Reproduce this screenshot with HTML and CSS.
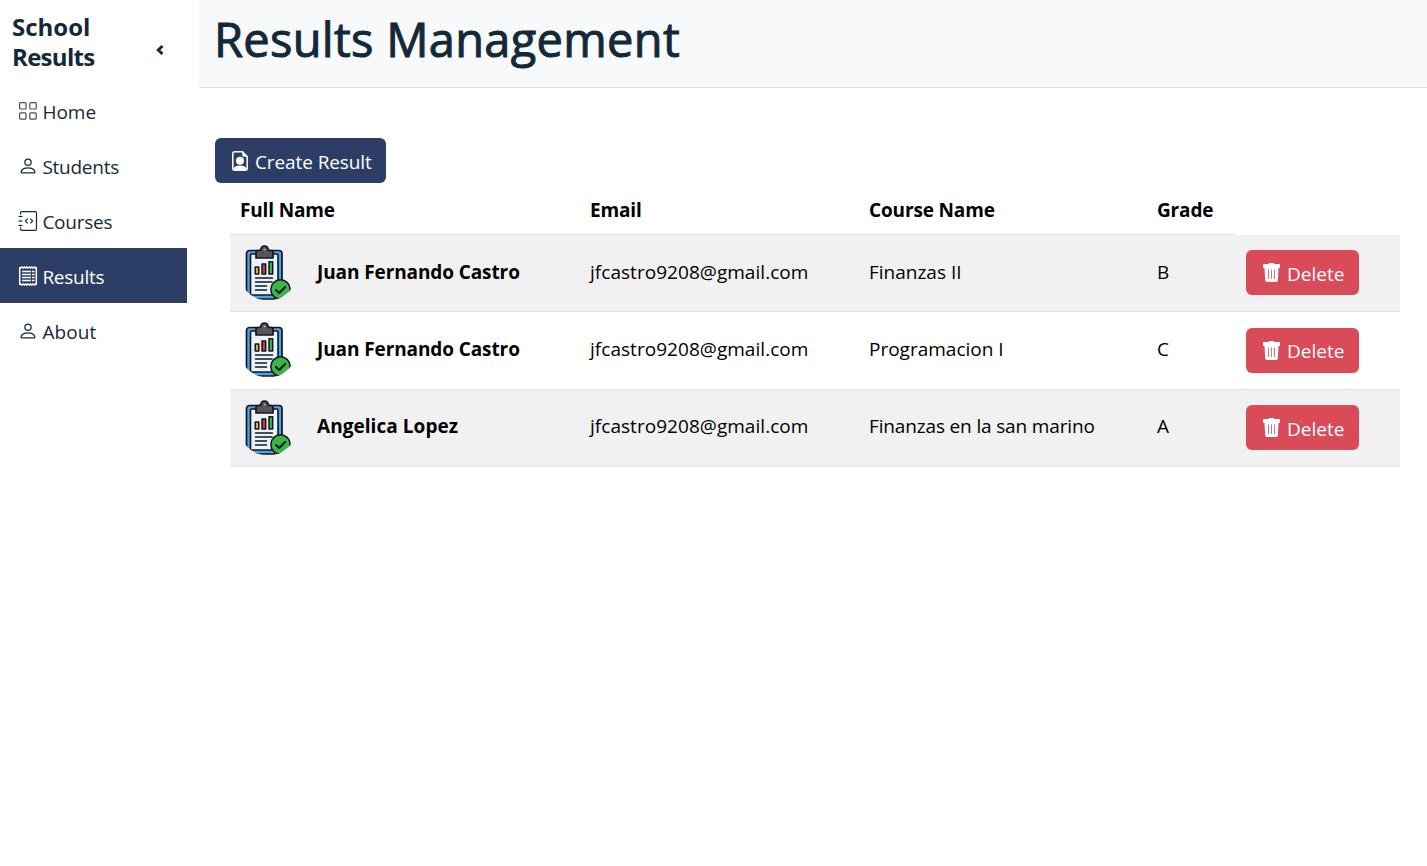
FILE: index.html
```html
<!DOCTYPE html>
<html lang="en">
<head>
<meta charset="utf-8">
<title>Results Management</title>
<link rel="stylesheet" href="styles.css">
</head>
<body>
<svg class="defs" width="0" height="0">
  <symbol id="person" viewBox="0 0 16 16"><path d="M8 8a3 3 0 1 0 0-6 3 3 0 0 0 0 6m2-3a2 2 0 1 1-4 0 2 2 0 0 1 4 0m4 8c0 1-1 1-1 1H3s-1 0-1-1 1-4 6-4 6 3 6 4m-1-.004c-.001-.246-.154-.986-.832-1.664C11.516 10.68 10.289 10 8 10s-3.516.68-4.168 1.332c-.678.678-.83 1.418-.832 1.664z"/></symbol>
  <symbol id="trash" viewBox="0 0 17 19"><path fill-rule="evenodd" d="M6.500 0h4a.8.8 0 0 1 .8.8V1H16.500a.5.500 0 0 1 .5.500v3a.5.500 0 0 1-.5.500H15.500l-.6 12a2 2 0 0 1-2 2H4.100a2 2 0 0 1-2-2L1.500 5H.5a.5.500 0 0 1-.5-.5v-3A.5.500 0 0 1 .5 1h5.200V.8A.8.8 0 0 1 6.500 0M5 6.500v9.500h.8V6.500zm3.100 0v9.500h.8V6.500zm3.100 0v9.500h.8V6.500z"/></symbol>
  <symbol id="report" viewBox="0 0 60 60">
    <clipPath id="round"><circle cx="30" cy="28" r="29.500"/></clipPath>
    <g clip-path="url(#round)" stroke="#15171c" stroke-linejoin="round" stroke-linecap="round">
      <rect x="8.500" y="7.500" width="35.500" height="48.500" rx="3" fill="#4da3e8" stroke-width="1.700"/>
      <rect x="12.500" y="11" width="27.500" height="41" rx="1" fill="#e9f2fd" stroke-width="1.600"/>
      <path d="M18 15v-5.500q0-2 2-2h2.500q.5-4.500 4-4.500t4 4.500H33q2 0 2 2V15z" fill="#59545c" stroke-width="1.700"/>
      <circle cx="26.500" cy="6.500" r=".8" fill="#ddd" stroke="none"/>
      <g stroke-width="1.500"><path d="M17.200 24h3.600v7h-3.600z" fill="#f4a623"/><path d="M24 21h3.700v10h-3.700z" fill="#d63445"/><path d="M31 18.800h3.700V31h-3.700z" fill="#3bb54a"/></g>
      <path d="M17.500 35h17M17.500 39h16.500M17.500 43h11M17.500 47h11" stroke-width="1.500"/>
      <circle cx="42.500" cy="46.500" r="9.700" fill="#3bb54a" stroke-width="1.500"/>
      <path d="m38 47 3.200 3 6-6" fill="none" stroke-width="2"/>
    </g>
  </symbol>
</svg>
<div class="app">
  <aside class="sidebar">
    <div class="brand"><h2 class="brand-name">School<br><span class="brand-second">Results</span></h2>
      <svg class="chevron" viewBox="0 0 8 10"><path d="M6.500 1 2.300 5l4.200 4" fill="none" stroke="currentColor" stroke-width="2.900"/></svg></div>
    <nav class="nav">
      <a class="nav-item"><svg class="icon grid-icon" viewBox="0 0 18 18"><g fill="none" stroke="#59406b" stroke-width="1.200"><rect x=".6" y=".6" width="6.400" height="6.400" rx="1"/><rect x="10.800" y=".6" width="6.400" height="6.400" rx="1"/><rect x=".6" y="10.800" width="6.400" height="6.400" rx="1"/><rect x="10.800" y="10.800" width="6.400" height="6.400" rx="1"/></g></svg><span class="nav-text">Home</span></a>
      <a class="nav-item"><svg class="icon"><use href="#person"/></svg><span class="nav-text tight">Students</span></a>
      <a class="nav-item"><svg class="icon" viewBox="0 0 20 20"><g fill="none" stroke="currentColor" stroke-width="1.200"><path d="M2.500 3.500V2Q2.500.6 4 .6h13Q18.500.6 18.500 2v16q0 1.400-1.500 1.400H4q-1.500 0-1.500-1.400v-1.500M2.500 4.700v1.600M2.500 9.200v1.600M2.500 13.700v1.600M.5 5.500h4M.5 10h4M.5 14.500h4M9.700 7.700 7.400 10l2.300 2.300M12.300 7.700l2.300 2.300-2.300 2.300"/></g></svg><span class="nav-text tight">Courses</span></a>
      <a class="nav-item active"><svg class="icon" viewBox="0 0 20 20"><g fill="none" stroke="currentColor" stroke-width="1.500"><path d="M1.700 1v18M18.300 1v18M1.500 1l1.200 1L4 1l1.200 1 1.200-1 1.200 1 1.200-1L10 2l1.200-1 1.200 1 1.200-1 1.200 1L16 1l1.200 1 1.200-1M1.500 19l1.200-1L4 19l1.200-1 1.200 1 1.200-1 1.200 1 1.200-1 1.200 1 1.200-1 1.200 1 1.200-1 1.200 1 1.200-1 1.200 1M4 5.500h9M4 8.500h9M4 11.500h9M4 14.500h9M14 5.500h2.500M14 8.500h2.500M14 11.500h2.500M14 14.500h2.500"/></g></svg><span class="nav-text tight">Results</span></a>
      <a class="nav-item"><svg class="icon"><use href="#person"/></svg><span class="nav-text about">About</span></a>
    </nav>
  </aside>
  <main class="main">
    <header class="header"><h1 class="title">Results Management</h1></header>
    <section class="content">
      <button class="btn create"><svg class="create-icon" viewBox="0 0 16 20"><path d="M10.500.8H2.800Q.8.800.8 2.800v14.400q0 2 2 2h10.400q2 0 2-2V5.500z" fill="none" stroke="currentColor" stroke-width="1.500"/><path d="M10.200.5v3.600q0 1.700 1.700 1.700h3.600z" fill="currentColor"/><circle cx="8" cy="9.800" r="4" fill="currentColor"/><path d="M1.500 17.500q1.500-3 6.500-3t6.500 3v1.500h-13z" fill="currentColor"/></svg><span class="create-text">Create Result</span></button>
      <table class="table">
        <colgroup><col class="c-name"><col class="c-email"><col class="c-course"><col class="c-grade"><col class="c-action"></colgroup>
        <thead><tr><th>Full Name</th><th>Email</th><th>Course Name</th><th>Grade</th></tr></thead>
        <tbody>
          <tr><td><div class="person"><svg class="report"><use href="#report"/></svg><b class="name">Juan Fernando Castro</b></div></td><td><span class="email">jfcastro9208@gmail.com</span></td><td>Finanzas II</td><td>B</td><td class="action"><button class="btn delete"><svg class="trash"><use href="#trash"/></svg><span>Delete</span></button></td></tr>
          <tr class="tall"><td><div class="person"><svg class="report"><use href="#report"/></svg><b class="name">Juan Fernando Castro</b></div></td><td><span class="email">jfcastro9208@gmail.com</span></td><td>Programacion I</td><td>C</td><td class="action"><button class="btn delete"><svg class="trash"><use href="#trash"/></svg><span>Delete</span></button></td></tr>
          <tr class="last"><td><div class="person"><svg class="report"><use href="#report"/></svg><b class="name angelica">Angelica Lopez</b></div></td><td><span class="email">jfcastro9208@gmail.com</span></td><td><span class="marino">Finanzas en la san marino</span></td><td>A</td><td class="action"><button class="btn delete"><svg class="trash"><use href="#trash"/></svg><span>Delete</span></button></td></tr>
        </tbody>
      </table>
    </section>
  </main>
</div>
</body>
</html>
```
FILE: styles.css
```css
* { box-sizing: border-box; }
body { margin: 0; background: #fff; color: #000; font: 400 19px/30px "Open Sans", "Noto Sans", sans-serif; }
.defs { position: absolute; }
.app { display: flex; min-height: 866px; }
.sidebar { width: 199px; flex: none; color: #142938; }
.brand { display: flex; align-items: center; justify-content: space-between; height: 83px; padding: 1px 35px 0 12px; }
.brand-name { margin: 0; font-size: 24px; line-height: 30px; font-weight: 700; }
.brand-second { letter-spacing: -.7px; }
.chevron { width: 8px; height: 10px; margin-top: 16px; }
.nav { width: 187px; padding-bottom: 1px; }
.nav-item { display: flex; align-items: center; gap: 4px; height: 55px; padding-left: 18.4px; }
.nav-item.active { background: #2c3e66; color: #fff; }
.nav-text { padding-top: 3px; }
.tight { letter-spacing: -.25px; }
.about { letter-spacing: .1px; }
.icon { width: 20px; height: 20px; fill: currentColor; flex: none; }
.grid-icon { width: 18px; height: 18px; margin: 0 1px; }
.main { flex: 1; }
.header { height: 88px; padding: 9px 15px; background: #f8f9fb; border-bottom: 1px solid #dee2e6; }
.title { margin: 0; color: #142938; font-size: 47px; line-height: 60px; font-weight: 500; letter-spacing: .3px; -webkit-text-stroke: 1px #142938; }
.content { padding: 50px 27px 0 16px; }
.btn { display: flex; align-items: center; height: 45px; border: 0; border-radius: 6px; color: #fff; font: inherit; }
.create { width: 171px; padding: 2px 0 0 17px; gap: 7px; background: #2c3e66; white-space: nowrap; }
.create-text { letter-spacing: -.1px; }
.create-icon { width: 16px; height: 20px; margin-top: -2px; }
.table { width: 1170px; margin: 3px 0 0 15px; table-layout: fixed; border-collapse: separate; border-spacing: 0; }
.c-name { width: 350px; }
.c-email { width: 279px; }
.c-course { width: 288px; }
.c-grade { width: 88px; }
.c-action { width: 165px; }
th { height: 49px; padding: 0 10px; text-align: left; font-weight: 700; letter-spacing: -.15px; border-bottom: 1px solid #dee2e6; }
td { height: 77px; padding: 0 10px 2px; white-space: nowrap; border-bottom: 1px solid #dee2e6; }
.tall td { height: 78px; padding-bottom: 4px; }
.last td { padding-bottom: 4px; }
tbody td:first-child { padding: 0 8px; }
tbody tr:nth-child(odd) { background: #f1f1f1; }
.person { display: flex; align-items: center; gap: 19px; }
.report { width: 60px; height: 60px; }
.tall .report { margin-top: -1px; margin-bottom: 1px; }
.name { padding-bottom: 2px; letter-spacing: -.1px; }
.tall .name, .last .name { padding-bottom: 4px; }
.angelica { letter-spacing: .05px; }
.email { letter-spacing: .04px; }
.marino { letter-spacing: -.15px; }
td.action { vertical-align: top; padding: 15px 0 0 11px; }
.tall td.action { padding-top: 16px; }
.delete { width: 113px; padding: 2px 0 0 17px; gap: 7px; background: #d94b59; }
.tall .delete { padding-top: 1px; }
.last .delete { padding-top: 3px; }
.trash { width: 17px; height: 19px; margin-top: -3px; fill: currentColor; }
.tall .trash { margin-top: -1px; }
```
